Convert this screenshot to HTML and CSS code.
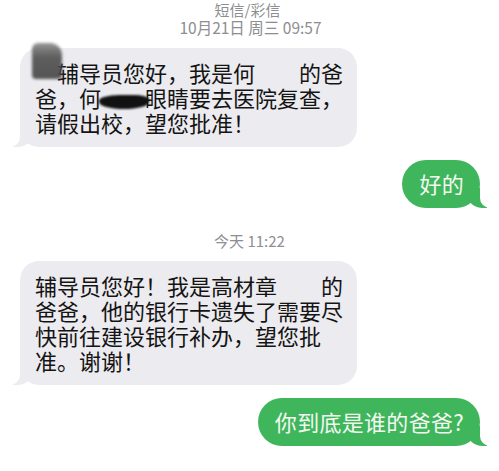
FILE: index.html
```html
<!DOCTYPE html>
<html lang="zh-CN">
<head>
<meta charset="utf-8">
<link rel="stylesheet" href="styles.css">
</head>
<body>
<div class="chat">
  <div class="meta-top">
    <div class="kind">短信/彩信</div>
    <div class="date">10月21日 周三 09:57</div>
  </div>

  <div class="row left first">
    <div class="bubble in">
      <span class="blot">何</span>辅导员您好，我是何<span class="gap">　　</span>的爸<br>
      爸，何<span class="smudge">　　</span>眼睛要去医院复查，<br>
      请假出校，望您批准！
    </div>
  </div>

  <div class="row right r1">
    <div class="bubble out">好的</div>
  </div>

  <div class="time">今天 11:22</div>

  <div class="row left second">
    <div class="bubble in">
      辅导员您好！我是高材章<span class="gap">　　</span>的<br>
      爸爸，他的银行卡遗失了需要尽<br>
      快前往建设银行补办，望您批<br>
      准。谢谢！
    </div>
  </div>

  <div class="row right r2">
    <div class="bubble out">你到底是谁的爸爸?</div>
  </div>
</div>
</body>
</html>
```

FILE: styles.css
```css
html, body {
  margin: 0;
  padding: 0;
  background: #ffffff;
}

body {
  width: 499px;
  height: 471px;
  overflow: hidden;
  font-family: "Noto Sans CJK SC", "Noto Sans", sans-serif;
}

.chat {
  display: flex;
  flex-direction: column;
  padding-top: 1px;
}

.meta-top {
  display: flex;
  flex-direction: column;
  align-items: center;
  color: #8d8d92;
}

.kind {
  font-size: 15px;
  line-height: 18px;
  margin-left: -4px;
}

.date {
  font-size: 15.5px;
  line-height: 17px;
  margin-left: 2px;
}

.row {
  display: flex;
}

.row.left {
  justify-content: flex-start;
  padding-left: 20px;
}

.row.right {
  justify-content: flex-end;
  padding-right: 19px;
}

.first { margin-top: 12px; }
.r1 { margin-top: 13px; }
.second { margin-top: 12px; }
.r2 { margin-top: 13px; }

.time {
  margin-top: 24px;
  text-align: center;
  font-size: 15px;
  line-height: 17px;
  color: #8d8d92;
}

.bubble {
  position: relative;
  font-size: 22px;
  line-height: 25px;
  white-space: nowrap;
}

.bubble.in {
  background: #ecebef;
  color: #141414;
  width: 308px;
  padding: 12px 14px 12px 15px;
  border-radius: 19px;
}

.bubble.in::before {
  content: "";
  position: absolute;
  bottom: 0;
  left: -7px;
  width: 20px;
  height: 20px;
  background: #ecebef;
  border-bottom-right-radius: 16px 14px;
  z-index: 0;
}

.bubble.in::after {
  content: "";
  position: absolute;
  bottom: 0;
  left: -26px;
  width: 26px;
  height: 22px;
  background: #ffffff;
  border-bottom-right-radius: 10px;
  z-index: 0;
}

.bubble.out {
  background: #3fb65c;
  color: #f3f8f1;
  padding: 11px 16px 12px 17px;
  border-radius: 24px;
  letter-spacing: 0.3px;
}

.bubble.out::before {
  content: "";
  position: absolute;
  bottom: 0;
  right: -7px;
  width: 20px;
  height: 20px;
  background: #3fb65c;
  border-bottom-left-radius: 16px 14px;
}

.bubble.out::after {
  content: "";
  position: absolute;
  bottom: 0;
  right: -26px;
  width: 26px;
  height: 22px;
  background: #ffffff;
  border-bottom-left-radius: 10px;
}

.blot {
  position: relative;
  color: transparent;
}

.blot::after {
  content: "";
  position: absolute;
  left: -3px;
  top: -13px;
  width: 30px;
  height: 36px;
  background: linear-gradient(180deg, #8a8a8a 0%, #4f4f4f 40%, #444 100%);
  border-radius: 6px 12px 4px 4px;
  filter: blur(1.6px);
  opacity: 0.9;
}

.gap {
  display: inline-block;
}

.smudge {
  position: relative;
}

.smudge::after {
  content: "";
  position: absolute;
  left: -2px;
  top: 14px;
  width: 50px;
  height: 14px;
  background: #111;
  border-radius: 40% 30% 50% 50%;
  filter: blur(1.2px);
}
```
